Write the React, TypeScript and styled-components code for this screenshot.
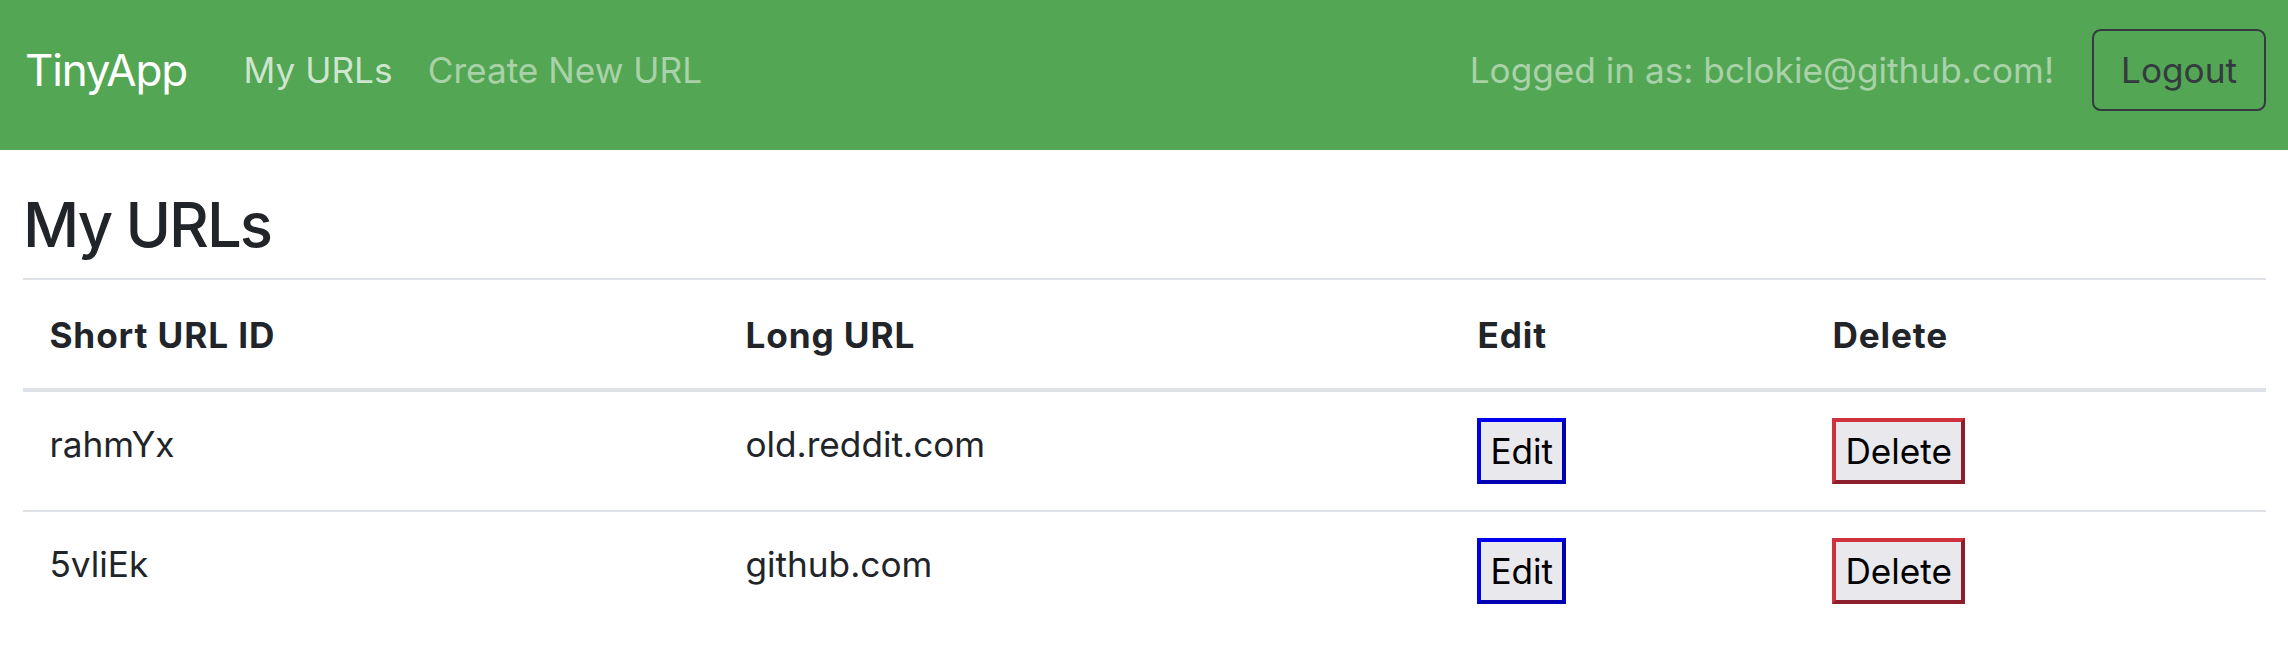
import React from "react";
import styled, { createGlobalStyle } from "styled-components";

const GlobalStyle = createGlobalStyle`
  html, body { margin: 0; padding: 0; background: #ffffff; }
  body {
    font-family: Inter, "Noto Sans", "Liberation Sans", sans-serif;
    color: #212529;
    font-size: 35.2px;
    line-height: 1.5;
  }
  * { box-sizing: border-box; }
`;

const Navbar = styled.nav`
  display: flex;
  align-items: center;
  height: 150px;
  padding: 0 22px 10px 25px;
  background: #53a653;
`;

const Brand = styled.a`
  font-size: 44px;
  line-height: 1.5;
  letter-spacing: -1.2px;
  color: #ffffff;
  text-decoration: none;
  margin-right: 39px;
`;

const NavList = styled.div`
  display: flex;
  align-items: center;
  flex: 1;
`;

const NavLink = styled.a<{ $active?: boolean }>`
  padding: 0 17.6px;
  color: ${(p) => (p.$active ? "rgba(255,255,255,0.72)" : "rgba(255,255,255,0.5)")};
  text-decoration: none;
`;

const UserText = styled.span`
  color: rgba(255, 255, 255, 0.5);
  margin-right: 38px;
`;

const LogoutButton = styled.button`
  font: inherit;
  color: #343a40;
  background: transparent;
  border: 2.2px solid #343a40;
  border-radius: 8.8px;
  padding: 12.5px 27px;
  line-height: 1.5;
`;

const Main = styled.main`
  padding: 0 22px 0 23px;
`;

const Heading = styled.h3`
  margin: 38px 0 0;
  padding-bottom: 16.5px;
  border-bottom: 2px solid #dee2e6;
  font-size: 61.6px;
  font-weight: 500;
  line-height: 1.2;
  letter-spacing: -2px;
`;

const Table = styled.table`
  width: 100%;
  border-collapse: collapse;
  margin-top: 2px;
`;

const HeadCell = styled.th<{ $w?: number }>`
  width: ${(p) => (p.$w ? `${p.$w}px` : "auto")};
  text-align: left;
  font-weight: 700;
  letter-spacing: 0.9px;
  padding: 26.4px;
  border-bottom: 4.4px solid #dee2e6;
  vertical-align: bottom;
`;

const Row = styled.tr`
  & + & > td { border-top: 2.2px solid #dee2e6; }
`;

const Cell = styled.td`
  padding: 26.4px;
  vertical-align: top;
`;

const ActionButton = styled.button<{ $tone: "edit" | "delete" }>`
  font: inherit;
  line-height: 1.5;
  color: #000000;
  background: #e9e9ed;
  padding: 2.2px 9px;
  border-width: 4.4px;
  border-style: solid;
  border-top-color: ${(p) => (p.$tone === "edit" ? "#0000ee" : "#d0313f")};
  border-left-color: ${(p) => (p.$tone === "edit" ? "#0000ee" : "#d0313f")};
  border-bottom-color: ${(p) => (p.$tone === "edit" ? "#0000b0" : "#8c1f2b")};
  border-right-color: ${(p) => (p.$tone === "edit" ? "#0000b0" : "#8c1f2b")};
`;

const urls = [
  { id: "rahmYx", long: "old.reddit.com" },
  { id: "5vliEk", long: "github.com" },
];

export default function App() {
  return (
    <>
      <GlobalStyle />
      <Navbar>
        <Brand href="#">TinyApp</Brand>
        <NavList>
          <NavLink $active href="#">My URLs</NavLink>
          <NavLink href="#">Create New URL</NavLink>
        </NavList>
        <UserText>Logged in as: bclokie@github.com!</UserText>
        <LogoutButton>Logout</LogoutButton>
      </Navbar>
      <Main>
        <Heading>My URLs</Heading>
        <Table>
          <thead>
            <tr>
              <HeadCell $w={696}>Short URL ID</HeadCell>
              <HeadCell $w={732}>Long URL</HeadCell>
              <HeadCell $w={355}>Edit</HeadCell>
              <HeadCell>Delete</HeadCell>
            </tr>
          </thead>
          <tbody>
            {urls.map((u) => (
              <Row key={u.id}>
                <Cell>{u.id}</Cell>
                <Cell>{u.long}</Cell>
                <Cell>
                  <ActionButton $tone="edit">Edit</ActionButton>
                </Cell>
                <Cell>
                  <ActionButton $tone="delete">Delete</ActionButton>
                </Cell>
              </Row>
            ))}
          </tbody>
        </Table>
      </Main>
    </>
  );
}
